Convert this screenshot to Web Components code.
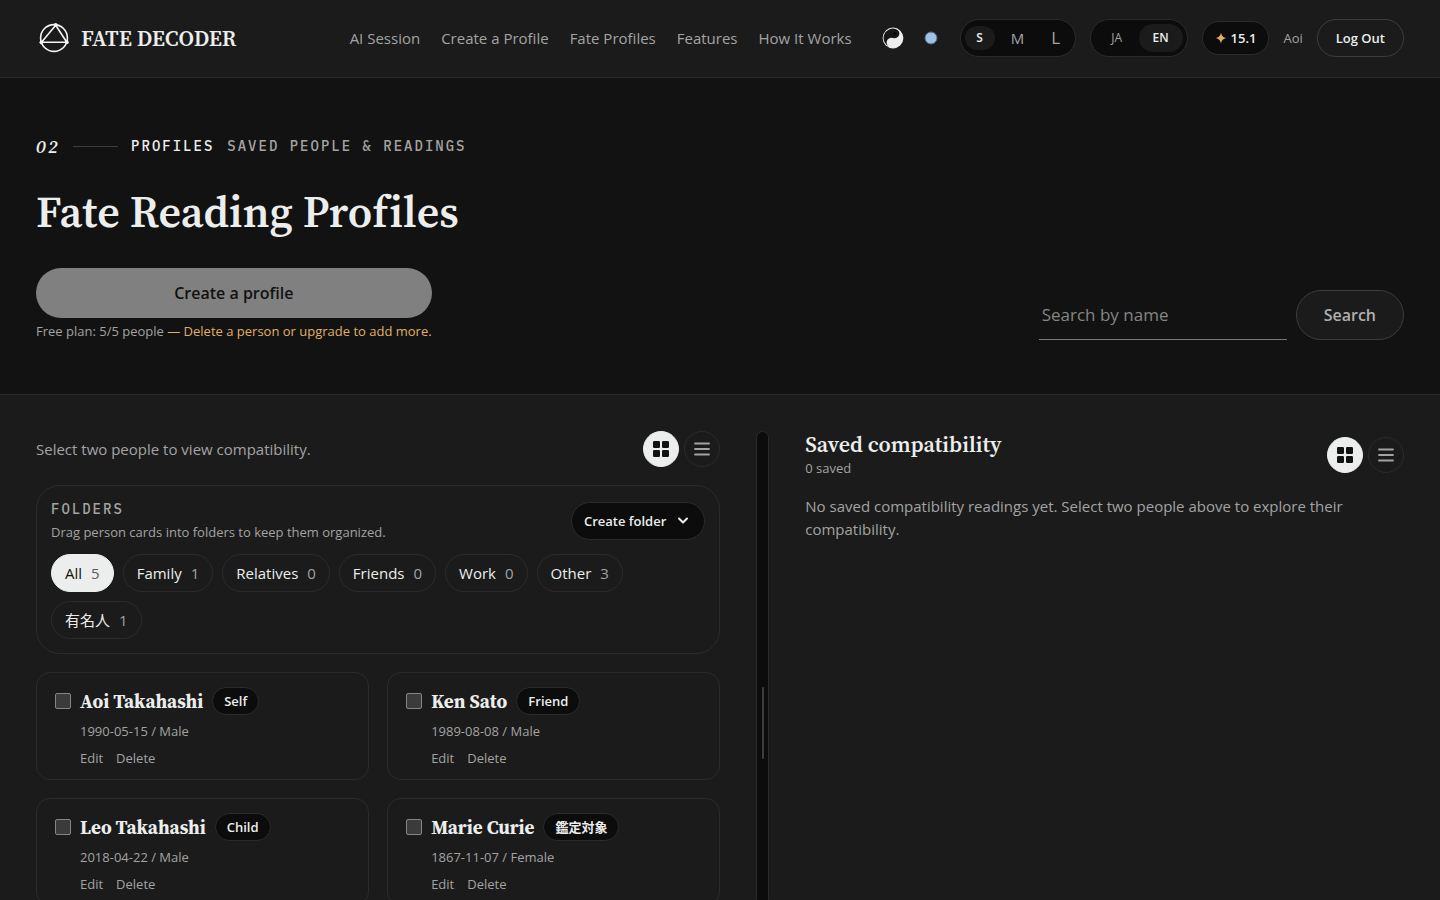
<!DOCTYPE html>
<html lang="en">
<head>
<meta charset="utf-8">
<meta name="viewport" content="width=device-width, initial-scale=1">
<title>Fate Decoder</title>
<style>
    :root {
        --bg: #121212;
        --surface: #1b1b1b;
        --ink: #0c0c0c;
        --line: #2b2b2b;
        --line-strong: #3d3d3d;
        --text: #eceeed;
        --muted: #a3a3a3;
        --gold: #e0b066;
        --serif: "Source Serif 4", "Liberation Serif", "Noto Sans CJK JP", serif;
        --mono: "IBM Plex Mono", "Liberation Mono", monospace;
        --page-x: 36px;
    }

    body {
        margin: 0;
        background: var(--surface);
        color: var(--text);
        font-family: "Open Sans", "Noto Sans CJK JP", sans-serif;
        font-size: 15px;
        line-height: 23px;
    }
</style>
</head>
<body>
<fate-app></fate-app>

<script>
const baseStyles = `
    *, *::before, *::after { box-sizing: border-box; }
    button, input { font: inherit; color: inherit; margin: 0; }
    button { cursor: pointer; }
    a { color: inherit; text-decoration: none; }
    h1, h2, h3, p { margin: 0; }
    svg { display: block; }
`;

class FateElement extends HTMLElement {
    constructor() {
        super();
        this.attachShadow({ mode: "open" });
    }

    connectedCallback() {
        if (this.shadowRoot.childNodes.length) return;
        const template = document.createElement("template");
        template.innerHTML = `<style>${baseStyles}${this.styles()}</style>${this.render()}`;
        this.shadowRoot.appendChild(template.content.cloneNode(true));
        this.ready();
    }

    styles() { return ""; }
    render() { return "<slot></slot>"; }
    ready() {}
}

class FateLogo extends FateElement {
    styles() {
        return `
            :host { display: block; }
            a {
                display: flex;
                align-items: center;
                gap: 9px;
                font: 600 22px/30px var(--serif);
                white-space: nowrap;
            }
        `;
    }

    render() {
        return `
            <a href="#">
                <svg width="36" height="36" viewBox="0 0 36 36" fill="none" stroke="#f4f4f4" stroke-width="1.6" aria-hidden="true">
                    <circle cx="18" cy="18" r="13.4"/>
                    <path d="M19.7 5.2 5.5 22.3l25.3-.1z" stroke-linejoin="round"/>
                    <g fill="#f4f4f4" stroke="none">
                        <circle cx="19.7" cy="5" r="1.9"/>
                        <circle cx="5.4" cy="22.3" r="1.9"/>
                        <circle cx="30.8" cy="22.2" r="1.9"/>
                    </g>
                </svg>
                <span>FATE DECODER</span>
            </a>
        `;
    }
}

// Row of exclusive choices. options: comma list, value: the selected one
class FateSegment extends FateElement {
    styles() {
        return `
            :host { display: block; }
            div {
                display: flex;
                align-items: center;
                padding: 4px;
                height: 38px;
                border: 1px solid var(--line);
                border-radius: 19px;
                background: var(--ink);
            }
            button {
                min-width: 44px;
                height: 28px;
                padding: 0;
                border: 0;
                border-radius: 14px;
                background: none;
                color: var(--muted);
                font-size: 12px;
                line-height: 28px;
            }
            button[aria-pressed="true"] {
                background: var(--surface);
                color: var(--text);
                font-weight: 600;
            }
            :host([sizes]) div { gap: 8px; }
            :host([sizes]) button { min-width: 30px; height: 24px; line-height: 24px; }
            :host([sizes]) button:nth-child(2) { font-size: 15px; }
            :host([sizes]) button:nth-child(3) { font-size: 17px; }
        `;
    }

    render() {
        const value = this.getAttribute("value");
        const buttons = this.getAttribute("options").split(",").map((option) =>
            `<button type="button" aria-pressed="${option === value}">${option}</button>`
        ).join("");
        return `<div role="group" aria-label="${this.getAttribute("label")}">${buttons}</div>`;
    }

    ready() {
        const buttons = this.shadowRoot.querySelectorAll("button");
        buttons.forEach((button) => {
            button.addEventListener("click", () => {
                buttons.forEach((b) => b.setAttribute("aria-pressed", String(b === button)));
            });
        });
    }
}

class FateHeader extends FateElement {
    styles() {
        return `
            :host { display: block; background: var(--surface); border-bottom: 1px solid var(--line); }
            header {
                display: flex;
                align-items: center;
                justify-content: space-between;
                padding: 19px var(--page-x) 20px;
            }
            .right, nav, .tools, .icons { display: flex; align-items: center; white-space: nowrap; }
            .right { gap: 29px; }
            nav { gap: 21px; color: var(--muted); }
            .tools, .icons { gap: 14px; }
            .icons { padding-right: 3px; }
            .icon {
                display: flex;
                align-items: center;
                justify-content: center;
                width: 24px;
                height: 38px;
                padding: 0;
                border: 0;
                background: none;
            }
            .credits {
                display: flex;
                align-items: center;
                gap: 4px;
                padding: 0 12px;
                height: 34px;
                border: 1px solid var(--line);
                border-radius: 17px;
                background: var(--ink);
                font-size: 13px;
                font-weight: 600;
            }
            .user { color: var(--muted); font-size: 13px; }
            .logout {
                height: 38px;
                padding: 0 18px;
                border: 1px solid var(--line-strong);
                border-radius: 19px;
                background: none;
                font-size: 13px;
                font-weight: 600;
            }
        `;
    }

    render() {
        return `
            <header>
                <fate-logo></fate-logo>
                <div class="right">
                    <nav>
                        <a href="#">AI Session</a>
                        <a href="#">Create a Profile</a>
                        <a href="#">Fate Profiles</a>
                        <a href="#">Features</a>
                        <a href="#">How It Works</a>
                    </nav>
                    <div class="tools">
                        <div class="icons">
                            <button class="icon" type="button" aria-label="Toggle theme">
                                <svg width="22" height="22" viewBox="0 0 22 22">
                                    <circle cx="11" cy="11" r="10.4" fill="#eceeed"/>
                                    <g transform="rotate(20 11 11)">
                                        <path d="M11 1.6A9.4 9.4 0 0 0 11 20.4 4.7 4.7 0 0 1 11 11 4.7 4.7 0 0 0 11 1.6z" fill="#171717"/>
                                        <circle cx="11" cy="6.3" r="1.4" fill="#060606"/>
                                    </g>
                                </svg>
                            </button>
                            <button class="icon" type="button" aria-label="Accent colour">
                                <svg width="14" height="14" viewBox="0 0 14 14">
                                    <circle cx="7" cy="7" r="6" fill="#9fc1e6" stroke="#55677b" stroke-width="1"/>
                                </svg>
                            </button>
                        </div>
                        <fate-segment sizes label="Text size" options="S,M,L" value="S"></fate-segment>
                        <fate-segment label="Language" options="JA,EN" value="EN"></fate-segment>
                        <span class="credits">
                            <svg width="12" height="12" viewBox="0 0 12 12" fill="#e0b066" aria-hidden="true">
                                <path d="M6 .4C6.7 3.9 8.1 5.3 11.6 6 8.1 6.7 6.7 8.1 6 11.6 5.3 8.1 3.9 6.7.4 6 3.9 5.3 5.3 3.9 6 .4z"/>
                            </svg>
                            <span>15.1</span>
                        </span>
                        <span class="user">Aoi</span>
                        <button class="logout" type="button">Log Out</button>
                    </div>
                </div>
            </header>
        `;
    }
}

class FateHero extends FateElement {
    styles() {
        return `
            :host { display: block; background: var(--bg); border-bottom: 1px solid var(--line); }
            section { padding: 54px var(--page-x); }
            .eyebrow {
                display: flex;
                align-items: center;
                gap: 13px;
                font: 500 14px/29px var(--mono);
                letter-spacing: 2px;
                color: var(--muted);
            }
            .eyebrow i {
                font: italic 600 19px/29px var(--serif);
                font-variant-numeric: lining-nums;
                color: var(--text);
            }
            .eyebrow hr { width: 45px; margin: 0; border: 0; border-top: 1px solid var(--line-strong); }
            .eyebrow b { font-weight: 500; color: var(--text); }
            h1 {
                margin-top: 22px;
                font: 600 44px/58px var(--serif);
                font-variant-ligatures: none;
            }
            .actions {
                display: flex;
                align-items: flex-end;
                justify-content: space-between;
                gap: 24px;
                margin-top: 27px;
            }
            .create { display: flex; flex-direction: column; gap: 4px; font-size: 13px; line-height: 18px; }
            .create button {
                height: 50px;
                border: 0;
                border-radius: 25px;
                background: #808080;
                color: #121212;
                font-size: 16px;
                font-weight: 600;
            }
            .create p { color: var(--muted); }
            .create p span { color: var(--gold); }
            form { display: flex; align-items: flex-end; gap: 9px; }
            form input {
                width: 248px;
                height: 50px;
                padding: 0 3px;
                border: 0;
                border-bottom: 1px solid #777;
                background: none;
                font-size: 17px;
                outline: 0;
            }
            form input::placeholder { color: #858585; opacity: 1; }
            form button {
                height: 50px;
                padding: 0 27px;
                border: 1px solid var(--line-strong);
                border-radius: 25px;
                background: var(--surface);
                color: #b0b0b0;
                font-size: 16px;
                font-weight: 600;
            }
        `;
    }

    render() {
        return `
            <section>
                <div class="eyebrow">
                    <i>02</i><hr><b>PROFILES</b><span>SAVED PEOPLE &amp; READINGS</span>
                </div>
                <h1>Fate Reading Profiles</h1>
                <div class="actions">
                    <div class="create">
                        <button type="button" disabled>Create a profile</button>
                        <p>Free plan: 5/5 people <span>— Delete a person or upgrade to add more.</span></p>
                    </div>
                    <form role="search">
                        <input type="text" aria-label="Search by name" placeholder="Search by name">
                        <button type="submit">Search</button>
                    </form>
                </div>
            </section>
        `;
    }

    ready() {
        this.shadowRoot.querySelector("form").addEventListener("submit", (e) => e.preventDefault());
    }
}

class ViewToggle extends FateElement {
    styles() {
        return `
            :host { display: flex; gap: 5px; flex-shrink: 0; }
            button {
                display: flex;
                align-items: center;
                justify-content: center;
                width: 36px;
                height: 36px;
                padding: 0;
                border: 1px solid var(--line);
                border-radius: 50%;
                background: none;
                color: var(--muted);
            }
            button[aria-pressed="true"] { background: var(--text); border-color: var(--text); color: #121212; }
        `;
    }

    render() {
        return `
            <button type="button" aria-label="Grid view" aria-pressed="true">
                <svg width="18" height="18" viewBox="0 0 18 18" fill="currentColor">
                    <rect x="1" y="1" width="7" height="7" rx="1.2"/>
                    <rect x="10" y="1" width="7" height="7" rx="1.2"/>
                    <rect x="1" y="10" width="7" height="7" rx="1.2"/>
                    <rect x="10" y="10" width="7" height="7" rx="1.2"/>
                </svg>
            </button>
            <button type="button" aria-label="List view" aria-pressed="false">
                <svg width="18" height="18" viewBox="0 0 18 18" stroke="currentColor" stroke-width="1.8" stroke-linecap="round">
                    <path d="M2 3.5h14M2 9h14M2 14.5h14"/>
                </svg>
            </button>
        `;
    }

    ready() {
        const buttons = this.shadowRoot.querySelectorAll("button");
        buttons.forEach((button) => {
            button.addEventListener("click", () => {
                buttons.forEach((b) => b.setAttribute("aria-pressed", String(b === button)));
            });
        });
    }
}

class FolderChip extends FateElement {
    styles() {
        return `
            :host { display: block; }
            button {
                display: flex;
                align-items: center;
                gap: 9px;
                height: 38px;
                padding: 0 13px;
                border: 1px solid var(--line);
                border-radius: 19px;
                background: none;
                white-space: nowrap;
            }
            .count { color: var(--muted); }
            :host([active]) button { background: var(--text); border-color: var(--text); color: #121212; }
            :host([active]) .count { color: #5c5c5c; }
        `;
    }

    render() {
        return `
            <button type="button">
                <slot></slot><span class="count">${this.getAttribute("count")}</span>
            </button>
        `;
    }
}

class FolderPanel extends FateElement {
    styles() {
        return `
            :host {
                display: block;
                padding: 14px;
                border: 1px solid var(--line);
                border-radius: 24px;
            }
            .head { display: flex; align-items: center; justify-content: space-between; }
            h2 { font: 500 14px/18px var(--mono); letter-spacing: 2px; color: var(--muted); }
            p { margin-top: 4px; color: var(--muted); font-size: 13px; line-height: 20px; }
            .head button {
                display: flex;
                align-items: center;
                gap: 9px;
                height: 38px;
                padding: 0 13px 0 12px;
                border: 1px solid var(--line);
                border-radius: 19px;
                background: var(--ink);
                font-size: 13px;
                font-weight: 600;
                white-space: nowrap;
            }
            .chips { display: flex; flex-wrap: wrap; gap: 9px; margin-top: 12px; }
        `;
    }

    render() {
        return `
            <div class="head">
                <div>
                    <h2>FOLDERS</h2>
                    <p>Drag person cards into folders to keep them organized.</p>
                </div>
                <button type="button" aria-expanded="false">
                    Create folder
                    <svg width="16" height="16" viewBox="0 0 16 16" fill="none" stroke="currentColor" stroke-width="2" stroke-linecap="round" stroke-linejoin="round" aria-hidden="true">
                        <path d="m4 5.5 4 4 4-4"/>
                    </svg>
                </button>
            </div>
            <div class="chips"><slot></slot></div>
        `;
    }
}

class PersonCard extends FateElement {
    styles() {
        return `
            :host {
                display: block;
                padding: 14px 18px 10px;
                border: 1px solid var(--line);
                border-radius: 14px;
            }
            .top { display: flex; align-items: center; gap: 9px; }
            input {
                appearance: none;
                width: 16px;
                height: 16px;
                border: 1px solid #858585;
                border-radius: 2px;
                background: #3b3b3b;
            }
            input:checked { background: var(--gold); }
            label { font: 700 19px/28px var(--serif); white-space: nowrap; }
            .tag {
                height: 28px;
                padding: 0 11px;
                border: 1px solid var(--line);
                border-radius: 14px;
                background: var(--ink);
                font-size: 13px;
                line-height: 26px;
                font-weight: 600;
                white-space: nowrap;
            }
            .body { padding-left: 25px; color: var(--muted); font-size: 13px; line-height: 22px; }
            .body p { margin-top: 5px; }
            .links { display: flex; gap: 13px; margin-top: 5px; }
            .links button { padding: 0; border: 0; background: none; }
        `;
    }

    render() {
        return `
            <div class="top">
                <input type="checkbox" id="pick">
                <label for="pick">${this.getAttribute("name")}</label>
                <span class="tag">${this.getAttribute("tag")}</span>
            </div>
            <div class="body">
                <p><slot></slot></p>
                <div class="links">
                    <button type="button">Edit</button>
                    <button type="button">Delete</button>
                </div>
            </div>
        `;
    }
}

class SplitHandle extends FateElement {
    styles() {
        return `
            :host {
                display: flex;
                justify-content: center;
                padding-top: 255px;
                border: 1px solid var(--line);
                border-radius: 7px;
                background: var(--ink);
                cursor: col-resize;
            }
            span { width: 2px; height: 72px; border-radius: 1px; background: var(--line-strong); }
        `;
    }

    render() { return "<span></span>"; }
}

class FateApp extends FateElement {
    styles() {
        return `
            :host { display: block; height: 100vh; overflow: hidden; }
            main {
                display: grid;
                grid-template-columns: minmax(0, 8fr) 13px minmax(0, 7fr);
                gap: 36px;
                padding: 36px var(--page-x);
            }
            .row { display: flex; align-items: center; justify-content: space-between; gap: 18px; }
            .people { display: flex; flex-direction: column; gap: 18px; }
            .people .row, .saved > p { color: var(--muted); }
            .cards { display: grid; grid-template-columns: repeat(2, minmax(0, 1fr)); gap: 18px; }
            h2 { font: 600 22px/26px var(--serif); }
            .count { color: var(--muted); font-size: 13px; line-height: 22px; }
            .saved > p { margin-top: 16px; }
        `;
    }

    render() {
        return `
            <fate-header></fate-header>
            <fate-hero></fate-hero>
            <main>
                <section class="people">
                    <div class="row">
                        <p>Select two people to view compatibility.</p>
                        <view-toggle></view-toggle>
                    </div>
                    <folder-panel>
                        <folder-chip count="5" active>All</folder-chip>
                        <folder-chip count="1">Family</folder-chip>
                        <folder-chip count="0">Relatives</folder-chip>
                        <folder-chip count="0">Friends</folder-chip>
                        <folder-chip count="0">Work</folder-chip>
                        <folder-chip count="3">Other</folder-chip>
                        <folder-chip count="1">有名人</folder-chip>
                    </folder-panel>
                    <div class="cards">
                        <person-card name="Aoi Takahashi" tag="Self">1990-05-15 / Male</person-card>
                        <person-card name="Ken Sato" tag="Friend">1989-08-08 / Male</person-card>
                        <person-card name="Leo Takahashi" tag="Child">2018-04-22 / Male</person-card>
                        <person-card name="Marie Curie" tag="鑑定対象">1867-11-07 / Female</person-card>
                    </div>
                </section>
                <split-handle role="separator" aria-orientation="vertical"></split-handle>
                <section class="saved">
                    <div class="row">
                        <div>
                            <h2>Saved compatibility</h2>
                            <p class="count">0 saved</p>
                        </div>
                        <view-toggle></view-toggle>
                    </div>
                    <p>No saved compatibility readings yet. Select two people above to explore their compatibility.</p>
                </section>
            </main>
        `;
    }
}

customElements.define("fate-logo", FateLogo);
customElements.define("fate-segment", FateSegment);
customElements.define("fate-header", FateHeader);
customElements.define("fate-hero", FateHero);
customElements.define("view-toggle", ViewToggle);
customElements.define("folder-chip", FolderChip);
customElements.define("folder-panel", FolderPanel);
customElements.define("person-card", PersonCard);
customElements.define("split-handle", SplitHandle);
customElements.define("fate-app", FateApp);
</script>
</body>
</html>
